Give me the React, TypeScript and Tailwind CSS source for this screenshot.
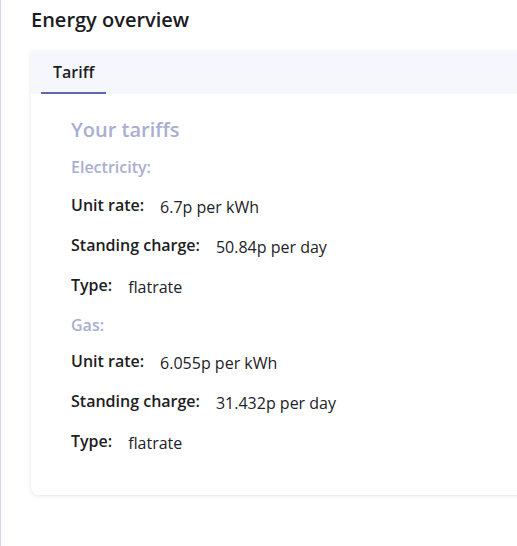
const rows = {
  electricity: [
    ["Unit rate:", "6.7p per kWh"],
    ["Standing charge:", "50.84p per day"],
    ["Type:", "flatrate"],
  ],
  gas: [
    ["Unit rate:", "6.055p per kWh"],
    ["Standing charge:", "31.432p per day"],
    ["Type:", "flatrate"],
  ],
};

function Section({ title, items, tight }: { title: string; items: string[][]; tight?: boolean }) {
  return (
    <div className="flex flex-col">
      <h3
        className={`h-6 text-base leading-6 font-semibold text-[#a9aed2] ${tight ? "mb-3" : "mb-[14px]"}`}
      >
        {title}
      </h3>
      {items.map(([label, value]) => (
        <div key={label} className="mb-4 flex h-6 items-start">
          <span className="mr-4 text-base leading-6 font-semibold text-[#1d1d24]">{label}</span>
          <span className="mt-[2px] text-base leading-6 text-[#222227]">{value}</span>
        </div>
      ))}
    </div>
  );
}

export default function App() {
  return (
    <div
      className="h-[546px] w-[517px] overflow-hidden border-l border-[#d2d6ea] bg-white"
      style={{ fontFamily: '"Open Sans", "Noto Sans", sans-serif' }}
    >
      <h1 className="pt-[6px] pl-[30px] text-xl leading-7 font-semibold text-[#1b1b22]">
        Energy overview
      </h1>
      <div className="mt-[17px] ml-[30px] w-[620px] rounded-b-lg bg-white shadow-[0_1px_4px_rgba(30,40,90,0.12)]">
        <div className="flex h-[43px] items-end bg-[#f6f7fd] pl-[10px]">
          <div className="border-b-2 border-[#5f68b5] px-3 pb-[8px] text-base leading-6 font-semibold text-[#1d1d24]">
            Tariff
          </div>
        </div>
        <div className="px-10 pt-[22px] pb-[26px]">
          <h2 className="mb-[11px] text-xl leading-7 font-semibold text-[#a9aed2]">Your tariffs</h2>
          <Section title="Electricity:" items={rows.electricity} />
          <Section title="Gas:" items={rows.gas} tight />
        </div>
      </div>
    </div>
  );
}
